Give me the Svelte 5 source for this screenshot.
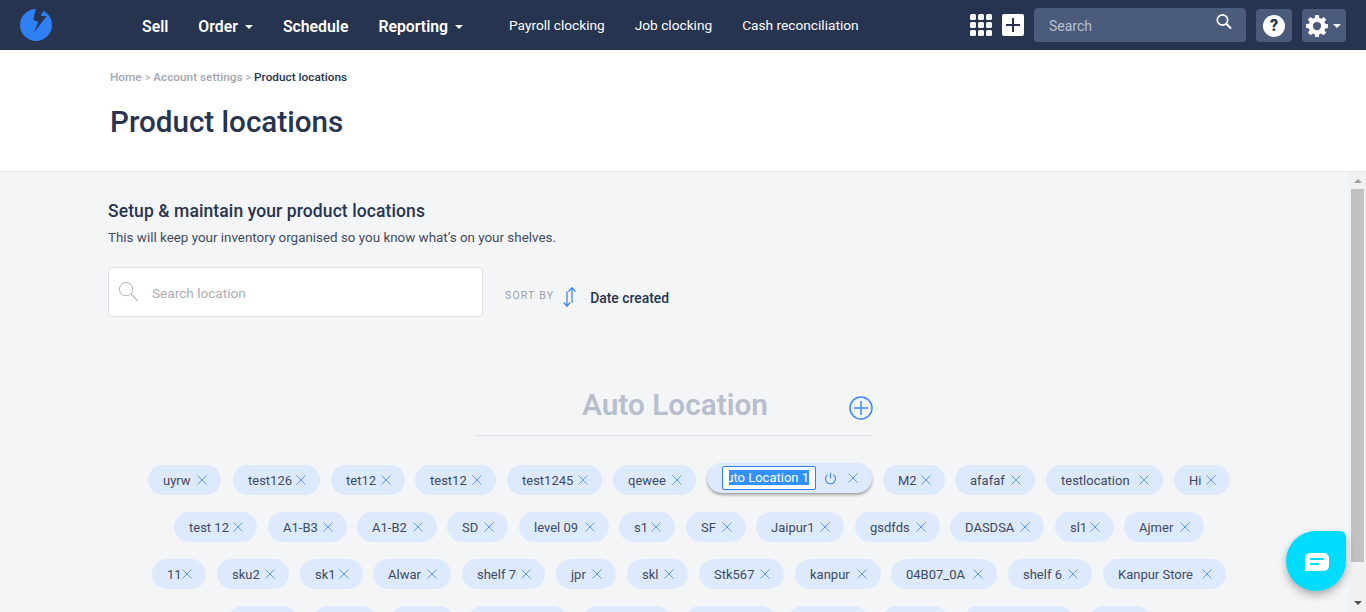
<script>
  // Each chip: label, left edge, right edge on the page.
  const rows = [
    [['uyrw',148,221],['test126',233,320],['tet12',331,405],['test12',415,496],['test1245',507,602],['qewee',613,696],{ active: true, start: 707, end: 872 },['M2',883,945],['afafaf',955,1035],['testlocation',1046,1163],['Hi',1174,1230]],
    [['test 12',174,257],['A1-B3',268,347],['A1-B2',357,437],['SD',447,508],['level 09',519,609],['s1',619,675],['SF',686,746],['Jaipur1',756,844],['gsdfds',855,940],['DASDSA',950,1044],['sl1',1055,1114],['Ajmer',1124,1204]],
    [['11',152,206],['sku2',217,289],['sk1',300,363],['Alwar',373,451],['shelf 7',462,545],['jpr',556,616],['skl',627,688],['Stk567',699,784],['kanpur',795,881],['04B07_0A',891,997],['shelf 6',1008,1092],['Kanpur Store',1103,1226]],
    [['',228,298],['',313,377],['',390,454],['',468,568],['',582,671],['',685,776],['',788,868],['',882,948],['',963,1074],['',1089,1151]]
  ];

  function placed(row) {
    let prev = 0;
    return row.map((item) => {
      const start = item.active ? item.start : item[1];
      const end = item.active ? item.end : item[2];
      const entry = { label: item.active ? null : item[0], active: !!item.active, width: end - start, offset: start - prev };
      prev = end;
      return entry;
    });
  }
</script>

<div class="page">
  <header class="topbar">
    <svg class="logo" viewBox="0 0 32 32" aria-hidden="true">
      <circle cx="16" cy="16" r="16" fill="#2f80f5"/>
      <path fill="#27344f" d="M16 -1 13.300 11 18.300 12.700 14 23.500 26.700 7 20.700 7 25 -1Z"/>
    </svg>
    <nav class="main-nav">
      <span>Sell</span>
      <span class="caret">Order</span>
      <span>Schedule</span>
      <span class="caret">Reporting</span>
    </nav>
    <nav class="sub-nav">
      <span>Payroll clocking</span>
      <span>Job clocking</span>
      <span>Cash reconciliation</span>
    </nav>
    <div class="tools">
      <div class="apps">{#each Array(9) as _}<i></i>{/each}</div>
      <div class="plus"><svg viewBox="0 0 22 22"><path d="M11 4v14M4 11h14" stroke="#27344f" stroke-width="2" fill="none"/></svg></div>
      <div class="top-search">
        <span>Search</span>
        <svg viewBox="0 0 18 18"><circle cx="7.500" cy="7" r="5.200" fill="none" stroke="#fff" stroke-width="1.700"/><path d="m11.500 11 4 4" stroke="#fff" stroke-width="2" stroke-linecap="round"/></svg>
      </div>
      <div class="icon-btn help"><b>?</b></div>
      <div class="icon-btn gear">
        <svg viewBox="0 0 24 24"><path fill="#fff" fill-rule="evenodd" d="M10 0h4l.6 3.200 2 .8L19.300 2.200 22 5l-1.900 2.600.9 2 3 .5v4l-3.100.6-.8 2 1.900 2.600-2.800 2.800-2.700-1.900-2 .8L14 24h-4l-.5-3-2-.9L4.900 22 2.100 19.200 4 16.600l-.9-2L0 14v-4l3.100-.5.900-2L2.100 4.900 4.900 2.100 7.600 4l1.900-.8L10 0Zm2 7.500a4.500 4.500 0 1 0 0 9 4.500 4.500 0 0 0 0-9Z"/></svg>
        <em></em>
      </div>
    </div>
  </header>

  <section class="title-band">
    <div class="crumbs"><span>Home</span><u>&gt;</u><span>Account settings</span><u>&gt;</u><strong>Product locations</strong></div>
    <h1>Product locations</h1>
  </section>

  <div class="scroller">
    <main>
      <h2>Setup &amp; maintain your product locations</h2>
      <p>This will keep your inventory organised so you know what’s on your shelves.</p>
      <div class="controls">
        <div class="loc-search">
          <svg viewBox="0 0 22 22"><circle cx="8.500" cy="8.500" r="7" fill="none" stroke="#a9adb5" stroke-width="1"/><path d="m13.500 13.500 7 7" stroke="#a9adb5" stroke-width="1.200"/></svg>
          <span>Search location</span>
        </div>
        <div class="sort">
          <span class="sort-label">SORT BY</span>
          <svg viewBox="0 0 14 20"><path d="M9 .8v15M5.500 4.500 9 .8l3.500 3.700M4 4.500v14.700M.8 15.500 4 19.200l3.200-3.700" fill="none" stroke="#3b87f7" stroke-width="1.300"/></svg>
          <span class="sort-value">Date created</span>
        </div>
      </div>

      <div class="group-head">
        <span class="group-title">Auto Location</span>
        <svg viewBox="0 0 24 24"><circle cx="12" cy="12" r="11" fill="none" stroke="#3b87f7" stroke-width="1.500"/><path d="M12 5v14M5 12h14" stroke="#3b87f7" stroke-width="1.500"/></svg>
      </div>

      <div class="chips">
        {#each rows as row}
          <div class="row">
            {#each placed(row) as item}
              {#if item.active}
                <div class="editing" style={`width:${item.width}px;margin-left:${item.offset}px`}>
                  <div class="edit-box"><div class="edit-clip"><span>Auto Location 1</span></div></div>
                  <svg class="power" viewBox="0 0 14 14"><path d="M7 .8v6M4 2.800a5.400 5.400 0 1 0 6 0" fill="none" stroke="#3b87f7" stroke-width="1.200"/></svg>
                  <svg class="x" viewBox="0 0 10 10"><path d="m.5.5 9 9M9.500.5l-9 9" stroke="#5a9af5" stroke-width="1"/></svg>
                </div>
              {:else}
                <div class="chip" style={`width:${item.width}px;margin-left:${item.offset}px`}>
                  <span>{item.label}</span>
                  <svg class="x" viewBox="0 0 10 10"><path d="m.5.5 9 9M9.500.5l-9 9" stroke="#5a9af5" stroke-width="1"/></svg>
                </div>
              {/if}
            {/each}
          </div>
        {/each}
      </div>
    </main>

    <div class="scrollbar">
      <i class="up"></i>
      <div class="thumb"></div>
      <i class="down"></i>
    </div>
  </div>

  <button class="chat" aria-label="Chat">
    <svg viewBox="0 0 24 18"><path fill="#fff" d="M5 0h14a5 5 0 0 1 5 5v8a5 5 0 0 1-5 5H0V5a5 5 0 0 1 5-5Z"/><path d="M5 6h14M5 11h9" stroke="#00dcff" stroke-width="2"/></svg>
  </button>
</div>

<style>
  :global(body) { margin: 0; background: #f4f5f7; }
  .page {
    position: relative;
    width: 1366px;
    height: 612px;
    overflow: hidden;
    display: flex;
    flex-direction: column;
    font-family: Roboto, "Liberation Sans", sans-serif;
    color: #27344f;
  }
  .topbar {
    height: 50px;
    flex: none;
    background: #27344f;
    display: flex;
    align-items: center;
    color: #fff;
  }
  .logo { width: 32px; height: 32px; margin-left: 20px; }
  .main-nav {
    margin-left: 90px;
    padding-top: 3px;
    display: flex;
    gap: 30px;
    font-weight: 600;
    font-size: 15.800px;
  }
  .caret { display: flex; align-items: center; gap: 7px; }
  .caret::after {
    content: "";
    border: 4px solid transparent;
    border-top-color: #fff;
    border-bottom-width: 0;
  }
  .sub-nav {
    margin-left: 46px;
    display: flex;
    gap: 30px;
    font-size: 13.700px;
  }
  .tools { margin-left: auto; margin-right: 20px; display: flex; align-items: center; }
  .apps { display: grid; grid-template-columns: repeat(3, 6px); gap: 2px; margin-right: 10px; }
  .apps i { width: 6px; height: 6px; border-radius: 1.500px; background: #fff; }
  .plus { width: 22px; height: 22px; border-radius: 2px; background: #fff; margin-right: 10px; }
  .plus svg { display: block; }
  .top-search {
    width: 212px;
    height: 34px;
    box-sizing: border-box;
    padding: 1px 13px 0 15px;
    border-radius: 4px;
    background: #4b5b7c;
    display: flex;
    align-items: center;
    justify-content: space-between;
    font-size: 14px;
    color: #b9c0ce;
    margin-right: 10px;
  }
  .top-search svg { width: 18px; height: 18px; margin-top: -7px; }
  .icon-btn {
    height: 33px;
    margin-top: 1px;
    border-radius: 4px;
    background: #4b5b7c;
    display: flex;
    align-items: center;
    justify-content: center;
  }
  .help { width: 36px; margin-right: 10px; }
  .help b {
    width: 22px; height: 22px; border-radius: 50%;
    background: #fff; color: #27344f;
    font-size: 16px; line-height: 22px; text-align: center; font-weight: 900;
  }
  .gear { width: 44px; gap: 5px; justify-content: flex-start; padding-left: 4px; box-sizing: border-box; }
  .gear svg { width: 22px; height: 22px; }
  .gear em { border: 4px solid transparent; border-top-color: #fff; border-bottom-width: 0; }

  .title-band {
    height: 122px;
    flex: none;
    box-sizing: border-box;
    background: #fff;
    padding: 20px 0 0 110px;
    border-bottom: 1px solid #e4e6ea;
  }
  .crumbs { display: flex; gap: 3px; font-size: 11.800px; line-height: 15px; color: #a3a7b3; font-weight: 500; }
  .crumbs u { text-decoration: none; font-weight: 400; font-size: 10.500px; }
  .crumbs strong { color: #27344f; font-weight: 500; }
  h1 { margin: 16px 0 0; font-size: 29.600px; line-height: 42px; font-weight: 500; color: #27344f; }

  .scroller { flex: 1; min-height: 0; display: flex; background: #f4f5f7; }
  main { flex: 1; min-width: 0; padding: 30px 0 0 108px; overflow: hidden; }
  h2 { margin: 0; font-size: 17.500px; line-height: 19px; letter-spacing: .1px; font-weight: 500; color: #27344f; }
  p { margin: 8px 0 0; font-size: 13.400px; line-height: 17px; color: #3f4a60; }
  .controls { margin-top: 21px; display: flex; align-items: flex-start; }
  .loc-search {
    width: 375px;
    height: 50px;
    box-sizing: border-box;
    background: #fff;
    border: 1px solid #dcdfe4;
    border-radius: 3px;
    display: flex;
    align-items: center;
    padding: 1px 0 0 9px;
    font-size: 13.600px;
    color: #a9adb5;
  }
  .loc-search svg { width: 21px; height: 21px; margin: -2px 13px 0 0; }
  .sort { margin-left: 22px; height: 60px; display: flex; align-items: center; }
  .sort-label { font-size: 10.500px; letter-spacing: 1.200px; color: #9a9ea8; margin-top: -4px; }
  .sort svg { width: 14px; height: 20px; margin: -1px 13px 0 9px; }
  .sort-value { font-size: 13.900px; font-weight: 500; color: #27344f; margin-top: 2px; }

  .group-head {
    position: relative;
    width: 397px;
    height: 50px;
    margin: 59px 0 0 368px;
    border-bottom: 1px solid #dfe1e5;
    box-sizing: border-box;
    text-align: center;
  }
  .group-title { display: block; font-size: 29.800px; line-height: 38px; font-weight: 600; color: #b7bfcf; margin-right: -1px; }
  .group-head svg { position: absolute; left: 373px; top: 10px; width: 24px; height: 24px; }

  .chips { margin: 29px 0 0 -108px; display: flex; flex-direction: column; gap: 17px; }
  .row { display: flex; height: 30px; align-items: center; }
  .chip {
    flex: none;
    height: 30px;
    box-sizing: border-box;
    padding: 0 14px 0 15px;
    border-radius: 15px;
    background: #dde9fd;
    display: flex;
    align-items: center;
    justify-content: space-between;
    font-size: 13px;
    color: #3f4a60;
    white-space: nowrap;
  }
  .x { width: 10px; height: 10px; flex: none; }
  .editing {
    flex: none;
    height: 30px;
    border-radius: 15px;
    background: #dde9fd;
    box-shadow: 0 2px 3px rgba(0,0,0,.35);
    display: flex;
    align-items: center;
    box-sizing: border-box;
    padding-left: 15px;
    margin-top: -4px;
  }
  .edit-box {
    width: 94px;
    height: 24px;
    box-sizing: border-box;
    border: 1px solid #2f80f5;
    border-radius: 2px;
    background: #fff;
    display: flex;
    align-items: center;
    padding: 0 6px 1px;
    font-size: 13px;
    white-space: nowrap;
  }
  .edit-clip { width: 80px; overflow: hidden; display: flex; justify-content: flex-end; }
  .edit-clip span { flex: none; background: #3390ff; color: #fff; }
  .power { width: 13px; height: 13px; margin-left: 8px; }
  .editing .x { margin-left: 11px; }

  .scrollbar {
    width: 17px;
    flex: none;
    background: #f1f1f1;
    display: flex;
    flex-direction: column;
    align-items: center;
    position: relative;
  }
  .thumb { width: 13px; height: 373px; background: #c1c1c1; margin-top: 17px; }
  .up, .down { position: absolute; width: 0; height: 0; border: 4px solid transparent; }
  .up { top: 7px; border-bottom-color: #a0a0a0; border-top-width: 0; }
  .down { bottom: 7px; border-top-color: #505050; border-bottom-width: 0; }

  .chat {
    position: absolute;
    left: 1286px;
    top: 531px;
    width: 60px;
    height: 60px;
    border: 0;
    padding: 0;
    background: #00dcff;
    border-radius: 30px 6px 30px 30px;
    box-shadow: 0 4px 8px rgba(0,0,0,.3);
    display: flex;
    align-items: center;
    justify-content: center;
  }
  .chat svg { width: 24px; height: 18px; margin: 2px 0 0 2px; }
</style>
